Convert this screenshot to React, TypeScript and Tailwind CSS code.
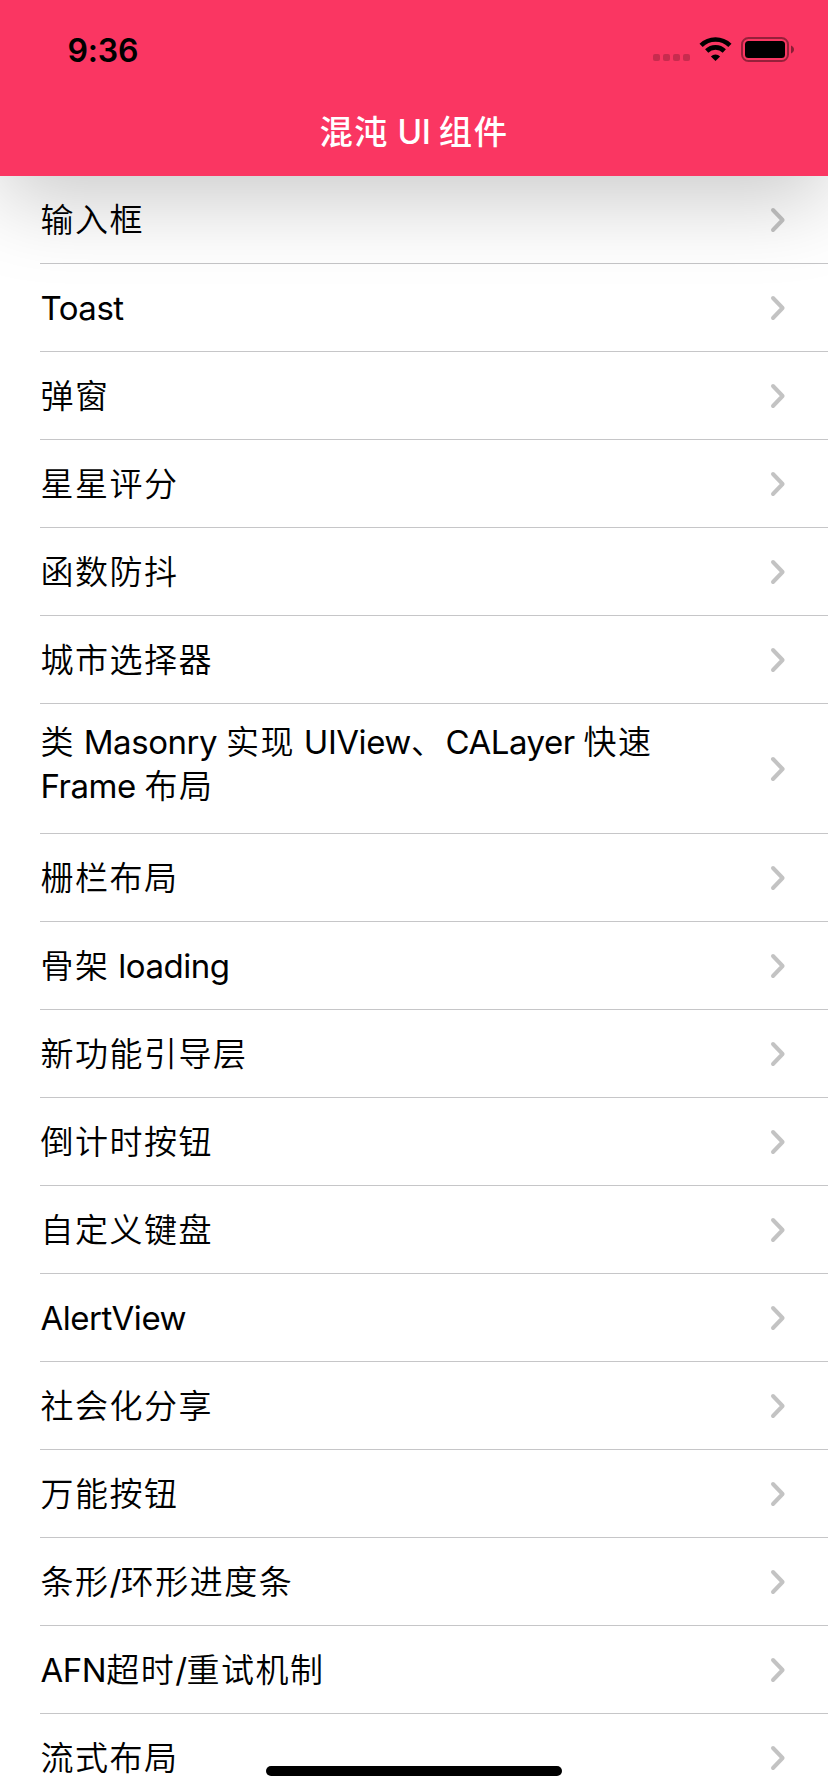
import React from "react";

const items = [
  "输入框",
  "Toast",
  "弹窗",
  "星星评分",
  "函数防抖",
  "城市选择器",
  "类 Masonry 实现 UIView、CALayer 快速 Frame 布局",
  "栅栏布局",
  "骨架 loading",
  "新功能引导层",
  "倒计时按钮",
  "自定义键盘",
  "AlertView",
  "社会化分享",
  "万能按钮",
  "条形/环形进度条",
  "AFN超时/重试机制",
  "流式布局",
];

function MixedText({ text, cjk }: { text: string; cjk: string }) {
  const runs = text.match(/[\x20-\x7e]+|[^\x20-\x7e]+/g) ?? [];
  return (
    <>
      {runs.map((run, i) =>
        /[\x20-\x7e]/.test(run) ? (
          <span key={i} className="tracking-[-0.45px]">{run}</span>
        ) : (
          <span key={i} className={cjk}>{run}</span>
        ),
      )}
    </>
  );
}

function Chevron() {
  return (
    <svg width="16" height="26" viewBox="0 0 16 26" fill="none" className="shrink-0">
      <path d="M3 3 L12.6 13 L3 23" stroke="#000" strokeOpacity="0.235" strokeWidth="4" strokeLinecap="round" strokeLinejoin="round" />
    </svg>
  );
}

function StatusIcons() {
  return (
    <svg width="144" height="28" viewBox="0 0 144 28" fill="none">
      <g fill="#000" fillOpacity="0.2">
        <rect x="0" y="18" width="7" height="7" rx="2" />
        <rect x="10" y="18" width="7" height="7" rx="2" />
        <rect x="20" y="18" width="7" height="7" rx="2" />
        <rect x="30" y="18" width="7" height="7" rx="2" />
      </g>
      <g stroke="#000" strokeWidth="4.6">
        <path d="M48.1 9.3 A20.6 20.6 0 0 1 76.9 9.3" />
        <path d="M53.7 15 A12.6 12.6 0 0 1 71.3 15" />
      </g>
      <path d="M62.5 25 L57.9 20.4 A6.6 6.6 0 0 1 67.1 20.4 Z" fill="#000" />
      <rect x="89" y="2" width="46" height="23" rx="6.5" stroke="#000" strokeOpacity="0.4" strokeWidth="2" />
      <rect x="92" y="5" width="40" height="17" rx="3.5" fill="#000" />
      <path d="M138 9.5 C142 11 142 16 138 17.5 Z" fill="#000" fillOpacity="0.45" />
    </svg>
  );
}

export default function App() {
  return (
    <div className="relative flex h-[1792px] w-[828px] flex-col overflow-hidden bg-white font-['Inter','Noto_Sans_CJK_SC',sans-serif] text-black">
      <header className="relative z-10 h-[176px] shrink-0 bg-[#fa3662] shadow-[0_24px_84px_rgba(0,0,0,0.21)]">
        <div className="flex h-[88px] items-center justify-between pt-[12px] pr-[31px] pl-[67.5px]">
          <span className="pt-[2px] text-[32px] leading-none font-semibold tracking-[-0.2px]">9:36</span>
          <StatusIcons />
        </div>
        <h1 className="flex h-[88px] items-center justify-center pt-[2px] text-[33.3px] font-medium text-white">
          <span className="whitespace-pre"><MixedText text="混沌 UI 组件" cjk="tracking-[1.55px]" /></span>
        </h1>
      </header>
      <ul>
        {items.map((item) => (
          <li key={item} className="pl-10">
            <div
              className={
                item.length > 20
                  ? "flex h-[130px] items-center justify-between border-b border-[#c6c6c8] pr-[42px]"
                  : "flex h-[88px] items-center justify-between border-b border-[#c6c6c8] pr-[42px]"
              }
            >
              <span
                className={
                  item.length > 20
                    ? "w-[660px] pb-[9px] pl-[0.4px] text-[33px] leading-[44px]"
                    : "w-[660px] pl-[0.4px] text-[33px] leading-[44px]"
                }
              >
                <MixedText text={item} cjk="font-[350] tracking-[1.5px]" />
              </span>
              <Chevron />
            </div>
          </li>
        ))}
      </ul>
      <div className="absolute bottom-[16px] left-[266px] h-[10px] w-[296px] rounded-full bg-black" />
    </div>
  );
}
